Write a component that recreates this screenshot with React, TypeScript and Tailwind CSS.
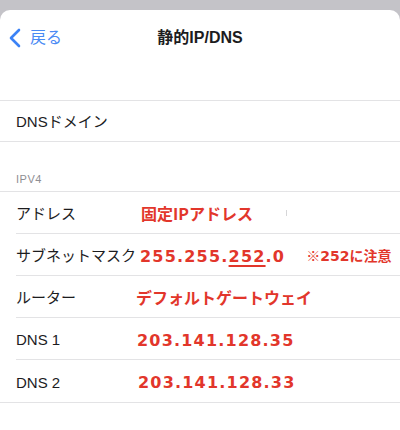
import React from "react";

const sans = { fontFamily: '"Liberation Sans", "Noto Sans CJK JP", sans-serif' };

type Row = {
  label: string;
  value: React.ReactNode;
  pad: string;
  last?: boolean;
};

const Num = ({ children }: { children: React.ReactNode }) => (
  <span
    className="translate-y-[2px] text-[16px] font-bold tracking-[1.2px] text-[#e2362b]"
    style={{ fontFamily: '"DejaVu Sans", sans-serif' }}
  >
    {children}
  </span>
);

const Jp = ({ children }: { children: React.ReactNode }) => (
  <span
    className="text-[16px] font-bold text-[#e2362b]"
    style={{ fontFamily: '"Noto Sans CJK JP", sans-serif' }}
  >
    {children}
  </span>
);

// pad = value's left edge minus the 16px row inset
const rows: Row[] = [
  {
    label: "アドレス",
    pad: "pl-[125px]",
    value: (
      <>
        <Jp>固定IPアドレス</Jp>
        <span className="ml-[33px] h-[6px] w-px bg-[#d6d6d8]" />
      </>
    ),
  },
  {
    label: "サブネットマスク",
    pad: "pl-[124px]",
    value: (
      <>
        <Num>
          255.255.<span className="underline decoration-[1.5px] underline-offset-[3px]">252</span>.0
        </Num>
        <span
          className="ml-[21px] translate-y-[1px] text-[14px] font-bold text-[#e2362b]"
          style={{ fontFamily: '"Noto Sans CJK JP", sans-serif' }}
        >
          ※<span style={{ fontFamily: '"DejaVu Sans", sans-serif' }}>252</span>に注意
        </span>
      </>
    ),
  },
  { label: "ルーター", pad: "pl-[120px]", value: <Jp>デフォルトゲートウェイ</Jp> },
  { label: "DNS 1", pad: "pl-[121px]", value: <Num>203.141.128.35</Num> },
  { label: "DNS 2", pad: "pl-[122px]", value: <Num>203.141.128.33</Num>, last: true },
];

export default function App() {
  return (
    <div className="w-[400px] h-[430px] overflow-hidden bg-[#c4c3c8]" style={sans}>
      <div className="mt-[10px] h-[420px] rounded-t-[10px] bg-white">
        {/* nav bar */}
        <div className="relative flex h-[56px] items-center">
          <div className="flex items-center pl-[8px] text-[#3b82f6]">
            <svg width="14" height="20" viewBox="0 0 14 20" fill="none">
              <path d="M11 2 L3 10 L11 18" stroke="currentColor" strokeWidth="2.6" strokeLinecap="round" strokeLinejoin="round" />
            </svg>
            <span className="ml-[8px] text-[16px] text-[#4a8af4]">戻る</span>
          </div>
          <div className="pointer-events-none absolute inset-x-0 text-center text-[16px] font-semibold text-[#1c1c1e]">
            静的IP/DNS
          </div>
        </div>

        <div className="h-[34px]" />

        {/* DNS domain */}
        <div className="flex h-[42px] items-center border-y border-[#e3e3e5] pl-4 pt-[3px] text-[15px] text-[#1c1c1e]">
          DNSドメイン
        </div>

        {/* section header */}
        <div className="flex h-[49px] items-end pb-[4px] pl-4 text-[11px] tracking-[0.5px] text-[#8e8e93]">
          IPV4
        </div>

        <div className="border-t border-[#e3e3e5]">
          {rows.map((r) => (
            <div key={r.label} className={r.last ? "border-b border-[#e3e3e5] pl-4" : "pl-4"}>
              <div
                className={
                  "relative flex h-[42px] items-center text-[15px] text-[#1c1c1e] " +
                  (r.last ? "" : "border-b border-[#e3e3e5]")
                }
              >
                <span className="absolute left-0 translate-y-[2px]">{r.label}</span>
                <div className={"flex items-center " + r.pad}>{r.value}</div>
              </div>
            </div>
          ))}
        </div>
      </div>
    </div>
  );
}
